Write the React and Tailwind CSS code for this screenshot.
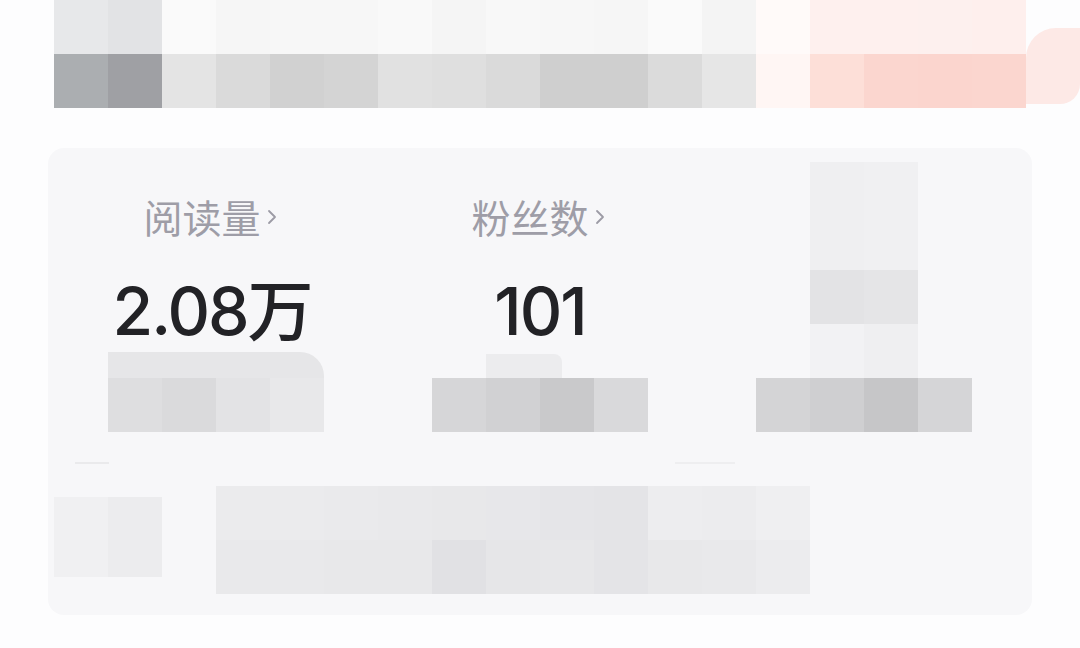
import React from "react";

const row1 = [
  "bg-[#e7e8ea]", "bg-[#e2e3e5]", "bg-[#fafafa]", "bg-[#f6f6f6]", "bg-[#f7f7f7]",
  "bg-[#f7f7f7]", "bg-[#f9f9f9]", "bg-[#f5f5f5]", "bg-[#f8f8f8]", "bg-[#f7f7f7]",
  "bg-[#f6f6f6]", "bg-[#fafafa]", "bg-[#f4f4f4]", "bg-[#fffaf9]", "bg-[#fef0ee]",
  "bg-[#fef0ee]", "bg-[#fdf0ee]", "bg-[#feefed]",
];
const row2 = [
  "bg-[#abaeb1]", "bg-[#9fa0a4]", "bg-[#e4e4e4]", "bg-[#dadada]", "bg-[#d1d1d1]",
  "bg-[#d4d4d4]", "bg-[#e1e1e1]", "bg-[#dfdfdf]", "bg-[#dadada]", "bg-[#cfcfcf]",
  "bg-[#cfcfcf]", "bg-[#dbdbdb]", "bg-[#e6e6e6]", "bg-[#fff6f4]", "bg-[#fddfd8]",
  "bg-[#fbd6cf]", "bg-[#fbd5ce]", "bg-[#fbd6cf]",
];

const col1 = ["bg-[#dedee0]", "bg-[#dadadc]", "bg-[#e3e3e5]", "bg-[#e8e8ea]"];
const col2 = ["bg-[#d6d6d8]", "bg-[#d1d1d3]", "bg-[#c9c9cb]", "bg-[#d9d9db]"];
const col3 = ["bg-[#d4d4d6]", "bg-[#cfcfd1]", "bg-[#c6c6c8]", "bg-[#d5d5d7]"];

const botA = [
  "bg-[#ebebed]", "bg-[#ebebed]", "bg-[#eaeaec]", "bg-[#e9e9eb]", "bg-[#e8e8ea]",
  "bg-[#e7e7ea]", "bg-[#e5e5e8]", "bg-[#e4e4e7]", "bg-[#ededef]", "bg-[#ececee]",
  "bg-[#efeff1]",
];
const botB = [
  "bg-[#e9e9eb]", "bg-[#e9e9eb]", "bg-[#e8e8ea]", "bg-[#e8e8ea]", "bg-[#e1e1e4]",
  "bg-[#e6e6e8]", "bg-[#e7e7e9]", "bg-[#e4e4e7]", "bg-[#e8e8ea]", "bg-[#e9e9eb]",
  "bg-[#ececee]",
];

function Cells({ colors, h = "h-[54px]" }) {
  return (
    <div className="flex">
      {colors.map((c, i) => (
        <div key={i} className={`w-[54px] ${h} ${c}`} />
      ))}
    </div>
  );
}

function Chevron() {
  return (
    <svg width="16" height="22" viewBox="0 0 16 22" className="ml-[2px] mt-[2px]">
      <polyline points="6,5 12,11 6,17" fill="none" stroke="#9c9ba5" strokeWidth="1.8" strokeLinecap="round" strokeLinejoin="round" />
    </svg>
  );
}

function Stat({ label, value }) {
  return (
    <div className="flex flex-col items-center">
      <div className="flex items-center text-[39px] leading-[48px] text-[#9e9da7] pr-[2px]">
        <span>{label}</span>
        <Chevron />
      </div>
      <div className="mt-[31px] font-['Inter','Noto_Sans_CJK_SC',sans-serif] text-[66px] leading-[80px] font-medium text-[#222226] tracking-[-2px]">
        {value}
      </div>
    </div>
  );
}

export default function App() {
  return (
    <div className="w-[1080px] h-[648px] bg-[#fdfdfe] overflow-hidden font-['Noto_Sans_CJK_SC','Noto_Sans',sans-serif]">
      {/* top mosaic */}
      <div className="relative flex flex-col pl-[54px]">
        <Cells colors={row1} />
        <Cells colors={row2} />
        <div className="absolute left-[1026px] top-[28px] w-[54px] h-[76px] bg-[#fde9e6] rounded-tl-[30px] rounded-br-[20px]" />
      </div>

      {/* card */}
      <div className="relative mt-[40px] ml-[48px] w-[984px] h-[467px] rounded-[16px] bg-[#f7f7f9]">
        <div className="grid grid-cols-3 pt-[44px]">
          <Stat label="阅读量" value="2.08万" />
          <Stat label="粉丝数" value="101" />
          <div />
        </div>

        {/* pixelated overlays */}
        <div className="absolute left-[60px] top-[204px] w-[216px] h-[26px] bg-[#e6e6e8] rounded-tr-[24px]" />
        <div className="absolute left-[60px] top-[230px]">
          <Cells colors={col1} />
        </div>

        <div className="absolute left-[438px] top-[206px] w-[76px] h-[24px] bg-[#ececee] rounded-tr-[8px]" />
        <div className="absolute left-[384px] top-[230px]">
          <Cells colors={col2} />
        </div>

        <div className="absolute left-[762px] top-[14px] flex flex-col">
          <Cells colors={["bg-[#efeff1]", "bg-[#f0f0f2]"]} h="h-[108px]" />
          <Cells colors={["bg-[#e3e3e5]", "bg-[#e5e5e7]"]} />
          <Cells colors={["bg-[#f2f2f4]", "bg-[#efeff1]"]} />
        </div>
        <div className="absolute left-[708px] top-[230px]">
          <Cells colors={col3} />
        </div>

        <div className="absolute left-[27px] top-[314px] w-[34px] h-[2px] bg-[#eaeaec]" />
        <div className="absolute left-[627px] top-[314px] w-[60px] h-[2px] bg-[#eeeef0]" />

        <div className="absolute left-[6px] top-[349px] flex">
          <div className="w-[54px] h-[80px] bg-[#f0f0f2]" />
          <div className="w-[54px] h-[80px] bg-[#ececee]" />
        </div>
        <div className="absolute left-[168px] top-[338px] flex flex-col">
          <Cells colors={botA} />
          <Cells colors={botB} />
        </div>
      </div>
    </div>
  );
}
